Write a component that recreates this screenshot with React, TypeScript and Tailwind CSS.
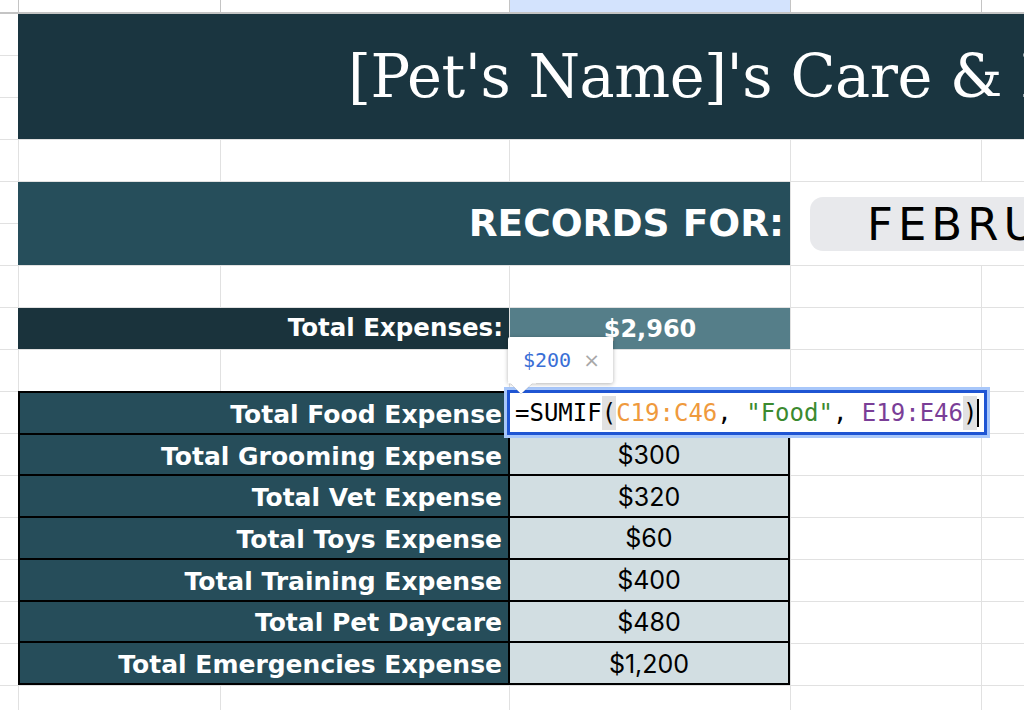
import React from "react";

const W = "bg-white";

function Blank({ n = 1 }: { n?: number }) {
  return (
    <>
      {Array.from({ length: n }).map((_, i) => (
        <div key={i} className={W} />
      ))}
    </>
  );
}

const rows: [string, string][] = [
  ["Total Food Expense", ""],
  ["Total Grooming Expense", "$300"],
  ["Total Vet Expense", "$320"],
  ["Total Toys Expense", "$60"],
  ["Total Training Expense", "$400"],
  ["Total Pet Daycare", "$480"],
  ["Total Emergencies Expense", "$1,200"],
];

export default function App() {
  const sans = { fontFamily: "Inter, 'Noto Sans', sans-serif" };
  const bold = { fontFamily: "'DejaVu Sans', Inter, sans-serif" };
  const mono = { fontFamily: "'DejaVu Sans Mono', 'Liberation Mono', monospace" };
  return (
    <div className="relative w-[1024px] h-[710px] overflow-hidden bg-white" style={sans}>
      {/* column header strip */}
      <div className="grid grid-cols-[18px_201px_288px_280px_190px_1fr] gap-x-px bg-[#c4c4c4] h-[14px] border-b-2 border-[#c4c4c4]">
        <div className="bg-white" />
        <div className="bg-white" />
        <div className="bg-white" />
        <div className="bg-[#d3e3fd]" />
        <div className="bg-white" />
        <div className="bg-white" />
      </div>

      {/* sheet grid */}
      <div className="grid grid-cols-[18px_201px_288px_280px_190px_1fr] grid-rows-[repeat(17,41px)] gap-px bg-[#e1e1e1]">
        {/* rows 1-3: title */}
        <div className={W} />
        <div className="col-span-5 row-span-3 bg-[#1a3540] flex items-center overflow-hidden pl-[330px] -ml-px">
          <span
            className="text-white whitespace-nowrap text-[59px] leading-none tracking-[-0.5px]"
            style={{ fontFamily: "'DejaVu Serif', 'Liberation Serif', serif" }}
          >
            [Pet's Name]'s Care &amp; Expense Tracker
          </span>
        </div>
        <div className={W} />
        <div className={W} />

        {/* row 4 */}
        <Blank n={6} />

        {/* rows 5-6: records for */}
        <div className={W} />
        <div className="col-span-3 row-span-2 bg-[#264e5b] flex items-center justify-end pr-[6px] -ml-px">
          <span className="text-white font-bold text-[37.5px] leading-none" style={bold}>RECORDS FOR:</span>
        </div>
        <div className="col-span-2 row-span-2 bg-white pl-[19px] pt-[15px] pb-[14px] overflow-hidden">
          <div className="h-full w-[400px] rounded-[13px] bg-[#e8e9ec] flex items-center pl-[57px]">
            <span
              className="text-black text-[45px] leading-none tracking-[5px]"
              style={{ fontFamily: "'DejaVu Sans', sans-serif", fontWeight: 400 }}
            >
              FEBRUARY
            </span>
          </div>
        </div>
        <div className={W} />

        {/* row 7 */}
        <Blank n={6} />

        {/* row 8: total expenses */}
        <div className={W} />
        <div className="col-span-2 bg-[#1a333c] flex items-center justify-end pr-[6px] -ml-px">
          <span className="text-white font-bold text-[24.5px] leading-none" style={bold}>Total Expenses:</span>
        </div>
        <div className="bg-[#557e89] flex items-center justify-center">
          <span className="text-white font-bold text-[24px] leading-none" style={bold}>$2,960</span>
        </div>
        <Blank n={2} />

        {/* row 9 */}
        <Blank n={6} />

        {/* rows 10-16: table */}
        <div className={W} />
        <div className="col-span-3 row-span-7 -ml-px -mt-px bg-black p-[2px] grid grid-cols-[488px_1fr] grid-rows-7 gap-[2px]">
          {rows.map(([label, value]) => (
            <React.Fragment key={label}>
              <div className="bg-[#264d5a] flex items-center justify-end pr-[6px] pt-[3px]">
                <span className="text-white font-bold text-[25px] leading-none" style={bold}>{label}</span>
              </div>
              <div className="bg-[#d2dee2] flex items-center justify-center pt-[2px]">
                <span className="text-black text-[25px] leading-none">{value}</span>
              </div>
            </React.Fragment>
          ))}
        </div>
        <Blank n={2} />
        {Array.from({ length: 6 }).map((_, i) => (
          <React.Fragment key={i}>
            <div className={W} />
            <div className={W} />
            <div className={W} />
          </React.Fragment>
        ))}

        {/* row 17 */}
        <Blank n={6} />
      </div>

      {/* formula editor overlay */}
      <div className="absolute left-[504px] top-[387px] w-[486px] h-[51px] border-[3px] border-[#a8c7fa]">
        <div className="h-full w-full border-[3px] border-[#1f55d3] bg-white flex items-center pl-[5px]">
          <span className="text-[24px] leading-none whitespace-nowrap text-black flex items-center" style={mono}>
            <span>=SUMIF</span>
            <span className="bg-[#e1e1e1] py-[5px]">(</span>
            <span className="text-[#ef9a3d]">C19:C46</span>
            <span>,&nbsp;</span>
            <span className="text-[#3b8a2f]">"Food"</span>
            <span>,&nbsp;</span>
            <span className="text-[#7a3e97]">E19:E46</span>
            <span className="bg-[#e1e1e1] py-[5px]">)</span>
            <span className="inline-block w-[2px] h-[28px] bg-black" />
          </span>
        </div>
      </div>

      {/* value tooltip overlay */}
      <div className="absolute left-[508px] top-[337px] w-[105px] h-[46px] bg-white rounded-[2px] shadow-[0_1px_4px_rgba(0,0,0,0.3)] flex items-center pl-[15px] gap-[12px]">
        <span className="text-[#3a6fd6] text-[20px] leading-none" style={mono}>$200</span>
        <span className="text-[#a8a8a8] text-[20px] leading-none" style={{ fontFamily: "'DejaVu Sans', sans-serif" }}>×</span>
      </div>
      <svg className="absolute left-[508px] top-[382px]" width="28" height="14" viewBox="0 0 28 14">
        <path d="M1 0 L13 12 L26 0 Z" fill="white" stroke="rgba(0,0,0,0.12)" strokeWidth="1" />
        <rect x="0" y="0" width="28" height="1.5" fill="white" />
      </svg>
    </div>
  );
}
